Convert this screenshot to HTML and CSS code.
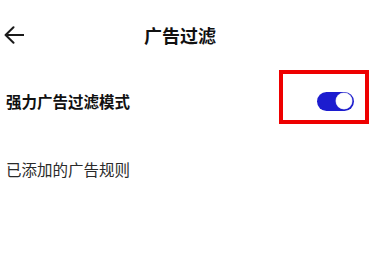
FILE: index.html
```html
<!DOCTYPE html>
<html lang="zh">
<head>
<meta charset="utf-8">
<link rel="stylesheet" href="styles.css">
</head>
<body>
<div class="page">
  <header class="header">
    <svg class="back" width="20" height="18" viewBox="0 0 20 18" aria-hidden="true">
      <path d="M19.5 9H1.5M9.5 1.2L1.6 9L9.5 16.8" fill="none" stroke="#1a1a1a" stroke-width="2" stroke-linecap="round" stroke-linejoin="round"/>
    </svg>
    <div class="title">广告过滤</div>
  </header>
  <div class="row row-strong">
    <div class="label">强力广告过滤模式</div>
    <div class="mark">
      <div class="toggle"><div class="knob"></div></div>
    </div>
  </div>
  <div class="row row-plain">
    <div class="label-plain">已添加的广告规则</div>
  </div>
</div>
</body>
</html>
```
FILE: styles.css
```css
html, body {
  margin: 0;
  padding: 0;
  background: #ffffff;
}
body {
  font-family: "Noto Sans CJK SC", "Noto Sans", sans-serif;
  width: 374px;
  height: 258px;
  overflow: hidden;
}
.page {
  display: flex;
  flex-direction: column;
}
.header {
  height: 70px;
  display: flex;
  align-items: center;
  padding-left: 4px;
}
.back {
  display: block;
  margin-top: -1px;
}
.title {
  margin-left: 120px;
  font-size: 18px;
  font-weight: 700;
  color: #111111;
  line-height: 1;
}
.row {
  display: flex;
  align-items: center;
  justify-content: space-between;
  padding-left: 6px;
  padding-right: 5px;
}
.row-strong {
  height: 64px;
}
.label {
  font-size: 15.5px;
  font-weight: 700;
  color: #111111;
  line-height: 1;
}
.mark {
  align-self: flex-start;
  border: 4.5px solid #ee0000;
  width: 82px;
  height: 46px;
  box-sizing: content-box;
  display: flex;
  justify-content: flex-end;
  align-items: flex-start;
}
.toggle {
  margin-top: 17.5px;
  margin-right: 11.5px;
  width: 37px;
  height: 19px;
  border-radius: 10px;
  background: #1c1ccf;
  display: flex;
  align-items: center;
  justify-content: flex-end;
  padding-right: 2px;
  box-sizing: border-box;
}
.knob {
  width: 16px;
  height: 16px;
  border-radius: 50%;
  background: #ffffff;
  box-shadow: 0 0 0 0.5px #c8c8e8;
}
.row-plain {
  height: 72px;
}
.label-plain {
  font-size: 15.5px;
  font-weight: 400;
  color: #2a2a2a;
  line-height: 1;
}
```
